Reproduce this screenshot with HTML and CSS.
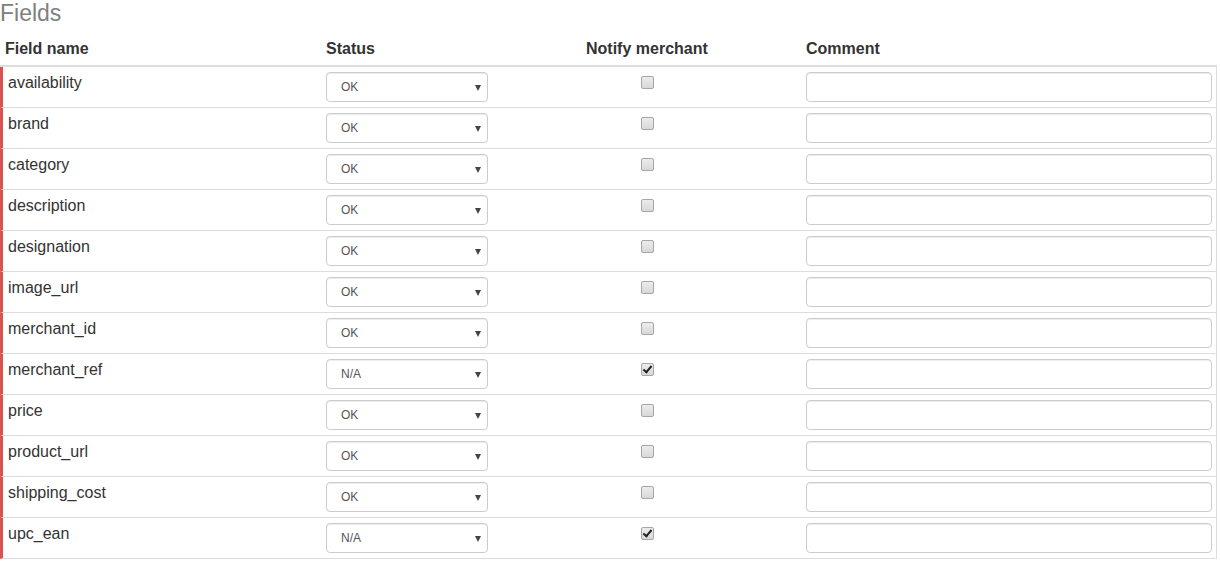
FILE: index.html
```html
<!DOCTYPE html>
<html>
<head>
<meta charset="utf-8">
<link rel="stylesheet" href="styles.css">
</head>
<body>
<h3 class="title">Fields</h3>
<table class="fields">
  <colgroup>
    <col class="c-name"><col class="c-status"><col class="c-notify"><col class="c-comment">
  </colgroup>
  <thead>
    <tr><th>Field name</th><th>Status</th><th>Notify merchant</th><th>Comment</th></tr>
  </thead>
  <tbody>
    <tr><td>availability</td><td><span class="sel"><select><option>OK</option><option>N/A</option></select></span></td><td><input type="checkbox" class="chk"></td><td><input type="text" class="txt"></td></tr>
    <tr><td>brand</td><td><span class="sel"><select><option>OK</option><option>N/A</option></select></span></td><td><input type="checkbox" class="chk"></td><td><input type="text" class="txt"></td></tr>
    <tr><td>category</td><td><span class="sel"><select><option>OK</option><option>N/A</option></select></span></td><td><input type="checkbox" class="chk"></td><td><input type="text" class="txt"></td></tr>
    <tr><td>description</td><td><span class="sel"><select><option>OK</option><option>N/A</option></select></span></td><td><input type="checkbox" class="chk"></td><td><input type="text" class="txt"></td></tr>
    <tr><td>designation</td><td><span class="sel"><select><option>OK</option><option>N/A</option></select></span></td><td><input type="checkbox" class="chk"></td><td><input type="text" class="txt"></td></tr>
    <tr><td>image_url</td><td><span class="sel"><select><option>OK</option><option>N/A</option></select></span></td><td><input type="checkbox" class="chk"></td><td><input type="text" class="txt"></td></tr>
    <tr><td>merchant_id</td><td><span class="sel"><select><option>OK</option><option>N/A</option></select></span></td><td><input type="checkbox" class="chk"></td><td><input type="text" class="txt"></td></tr>
    <tr><td>merchant_ref</td><td><span class="sel"><select><option>N/A</option><option>OK</option></select></span></td><td><input type="checkbox" class="chk" checked></td><td><input type="text" class="txt"></td></tr>
    <tr><td>price</td><td><span class="sel"><select><option>OK</option><option>N/A</option></select></span></td><td><input type="checkbox" class="chk"></td><td><input type="text" class="txt"></td></tr>
    <tr><td>product_url</td><td><span class="sel"><select><option>OK</option><option>N/A</option></select></span></td><td><input type="checkbox" class="chk"></td><td><input type="text" class="txt"></td></tr>
    <tr><td>shipping_cost</td><td><span class="sel"><select><option>OK</option><option>N/A</option></select></span></td><td><input type="checkbox" class="chk"></td><td><input type="text" class="txt"></td></tr>
    <tr><td>upc_ean</td><td><span class="sel"><select><option>N/A</option><option>OK</option></select></span></td><td><input type="checkbox" class="chk" checked></td><td><input type="text" class="txt"></td></tr>
  </tbody>
</table>
</body>
</html>
```
FILE: styles.css
```css
* { box-sizing: border-box; }
html, body {
  margin: 0;
  padding: 0;
  background: #fff;
  font-family: "Liberation Sans", Arial, sans-serif;
  font-size: 16px;
  color: #333;
}
.title {
  margin: 0 0 9px 0;
  font-size: 23px;
  line-height: 26px;
  font-weight: normal;
  color: #808080;
}
.fields {
  border-collapse: separate;
  border-spacing: 0;
  table-layout: fixed;
  width: 1217px;
}
.c-name { width: 321px; }
.c-status { width: 260px; }
.c-notify { width: 220px; }
.c-comment { width: 416px; }
.fields th {
  text-align: left;
  font-weight: bold;
  padding: 4px 5px 6px 5px;
  line-height: 20px;
  height: 32px;
  border-bottom: 2px solid #ddd;
}
.fields td {
  padding: 5px;
  line-height: 20px;
  height: 41px;
  vertical-align: top;
  border-bottom: 1px solid #ddd;
}
.fields td:first-child {
  border-left: 3px solid #d9534f;
}
.fields td:last-child {
  border-right: 1px solid #ddd;
}
.fields td:first-child { padding-top: 6px; padding-bottom: 4px; }
.sel {
  position: relative;
  display: block;
  width: 162px;
  height: 30px;
}
.sel::after {
  content: "";
  position: absolute;
  right: 7px;
  top: 13px;
  border-left: 3px solid transparent;
  border-right: 3px solid transparent;
  border-top: 6px solid #444;
  pointer-events: none;
}
.sel select {
  -webkit-appearance: none;
  appearance: none;
  display: block;
  width: 162px;
  height: 30px;
  margin: 0;
  padding: 0 20px 0 14px;
  border: 1px solid #ccc;
  border-radius: 4px;
  background: #fff;
  font-family: "Liberation Sans", Arial, sans-serif;
  font-size: 12px;
  color: #555;
  box-shadow: inset 0 1px 1px rgba(0,0,0,.075);
}
.chk {
  -webkit-appearance: none;
  appearance: none;
  display: block;
  position: relative;
  width: 13px;
  height: 13px;
  margin: 4px 0 0 55px;
  border: 1px solid #a6a6a6;
  border-radius: 2px;
  background: linear-gradient(#ececec, #d8d8d8);
}
.chk:checked::after {
  content: "";
  position: absolute;
  left: 3px;
  top: 0px;
  width: 3px;
  height: 7px;
  border: solid #222;
  border-width: 0 2px 2px 0;
  transform: rotate(40deg);
}
.txt {
  display: block;
  width: 406px;
  height: 30px;
  margin: 0;
  padding: 6px 12px;
  border: 1px solid #ccc;
  border-radius: 4px;
  background: #fff;
  font-family: "Liberation Sans", Arial, sans-serif;
  font-size: 14px;
  color: #555;
  box-shadow: inset 0 1px 1px rgba(0,0,0,.075);
}
```
